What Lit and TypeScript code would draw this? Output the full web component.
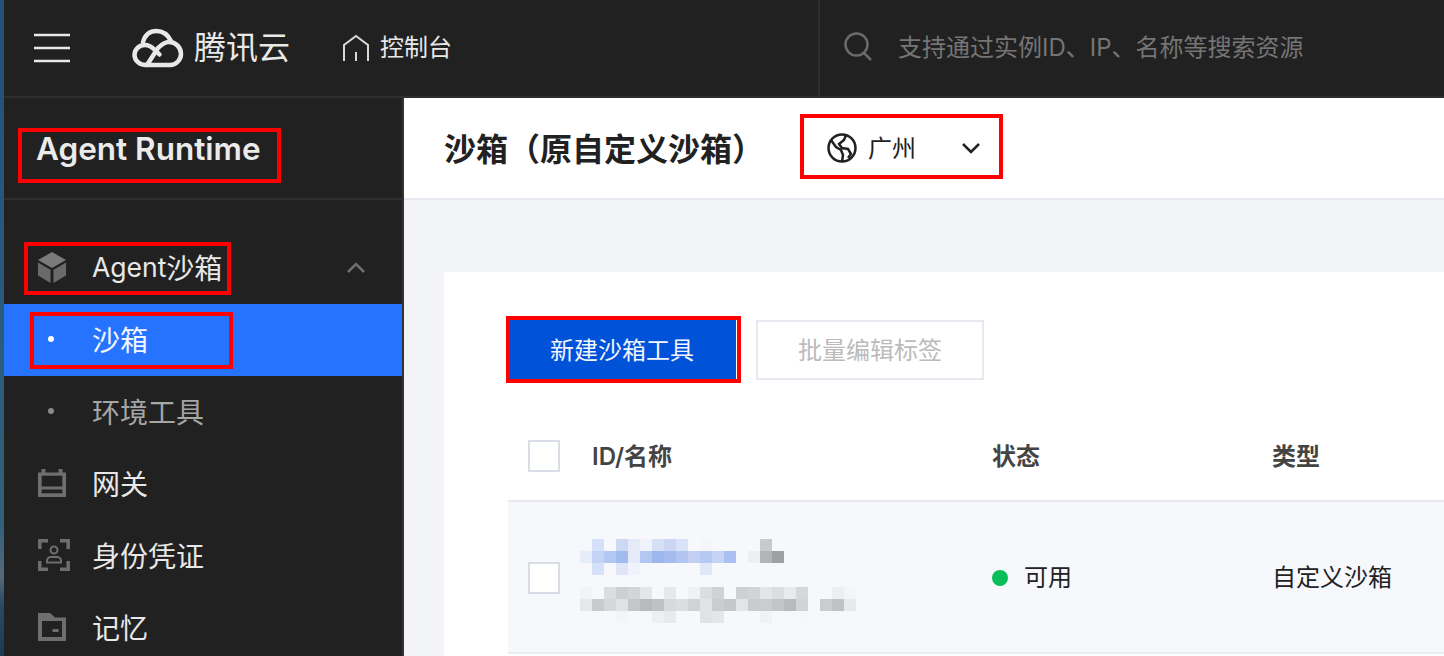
import { LitElement, css, html, svg } from 'lit'
import { customElement } from 'lit/decorators.js'

// red annotation frames drawn on top of the console screenshot
const marks = [
  { x: 18, y: 128, w: 263, h: 55 },
  { x: 24, y: 242, w: 207, h: 53 },
  { x: 30, y: 312, w: 203, h: 57 },
  { x: 800, y: 114, w: 203, h: 65 },
  { x: 506, y: 316, w: 235, h: 67 },
]

// mosaic over the instance id / name, one string of colours per row (12px cells)
const blurId = [
  ',d5e1f8,,cdd8f5,e4eaf8,f0f3fb,d5e0f7,cbd6f4,dae2f7,,f5f6fb,,,,,c9cacc,',
  'e6ecf8,c3d3f4,b2c7f2,a2bbef,e4eaf8,b2c7f2,9db8ee,a5bdee,b2c5f1,c2cff3,b6c9f2,c6d3f5,a9c0f0,,eeeff2,b3b4b6,9fa0a2',
  ',d5e1f8,,e0e6f8,f0f3fb,,,,,,e0e7f9,,,,,,',
]
const blurName = [
  'f2f3f6,,dcdde0,cecfd2,d3d5d8,e5e6e9,,e7e8eb,,f0f1f4,dcdde0,d0d2d5,,cfd0d3,d2d3d5,e4e5e8,dcdde0,e9eaed,d5d7da,,,edeef1,f4f5f8',
  'e6e7ea,c9cacd,d6d7d9,e1e2e4,c5c6c8,b9babc,c0c1c3,d8d9db,dcdde0,d1d2d5,e2e3e5,cbccd0,c6c7ca,e3e4e6,cacbcd,cbcccf,c4c5c8,b9babc,d2d3d6,,cbccd0,c1c2c5,e8e9ec',
  ',,,f3f4f7,,,eeeff2,e9eaed,,,e1e2e4,e5e6e9,,,,f1f2f5,,,f6f7f9,,,,',
]

const icons = {
  cube: svg`<svg width="28" height="31" viewBox="0 0 28 31"><path fill="#7a7a7a" d="M14 0l14 8-14 8L0 8z"/><path fill="#6a6a6a" d="M0 10.500l12.500 7.300V31L0 23.500zM28 10.500l-12.500 7.300V31L28 23.500z"/></svg>`,
  gateway: svg`<svg width="28" height="28" viewBox="0 0 28 28"><path fill="#6e6e6e" fill-rule="evenodd" d="M3.500 0h4v3.500h13V0h4v3.500H28V28H0V3.500h3.500zM3.700 6.800v10.700h20.600V6.800zM3.700 20.500v3.700h20.600v-3.700z"/></svg>`,
  identity: svg`<svg width="32" height="32" viewBox="0 0 32 32"><g fill="none" stroke="#6e6e6e"><path stroke-width="3.500" d="M10 1.800H1.800V10M22 1.800h8.200V10M10 30.200H1.800V22M22 30.200h8.200V22"/><circle stroke-width="2" cx="16" cy="11" r="3.500"/><path stroke-width="2" d="M9 23.500v-2c0-2 2-3.500 4-3.500h6c2 0 4 1.500 4 3.500v2z"/></g></svg>`,
  folder: svg`<svg width="28" height="28" viewBox="0 0 28 28"><path fill="#6e6e6e" fill-rule="evenodd" d="M0 0h12l5 4.500h11V28H0zM4 8v16h20V8z"/><path fill="#6e6e6e" d="M14.500 16h6v3h-6z"/></svg>`,
}

@customElement('app-root')
export class AppRoot extends LitElement {
  static styles = css`
    :host {
      display: block;
      position: relative;
      width: 1444px;
      height: 656px;
      overflow: hidden;
      font-family: Inter, 'Noto Sans CJK SC', sans-serif;
      /* bit of desktop wallpaper showing left of the browser window */
      background: linear-gradient(180deg, #24507a 0%, #2c5a7c 50%, #33607a 80%, #56687a 88%, #2a4a66 92%, #1c3a55 100%);
    }
    .window {
      margin-left: 4px;
      height: 656px;
      display: flex;
      flex-direction: column;
    }
    .topbar {
      flex: none;
      height: 96px;
      background: #212121;
      border-bottom: 2px solid #2e2e2e;
      display: flex;
      align-items: center;
    }
    .menu {
      margin-left: 30px;
      display: block;
    }
    .logo {
      margin-left: 62px;
      display: block;
    }
    .brand {
      margin-left: 10px;
      width: 96px;
      font-size: 32px;
      line-height: 40px;
      color: #e8e8e8;
      white-space: nowrap;
    }
    .home {
      margin-left: 51px;
      display: block;
    }
    .console {
      margin-left: 9px;
      width: 438px;
      padding-bottom: 5px;
      font-size: 24px;
      color: #e8e8e8;
    }
    .search {
      align-self: stretch;
      flex: 1;
      border-left: 2px solid #2e2e2e;
      display: flex;
      align-items: center;
      padding-left: 24px;
      padding-bottom: 4px;
      gap: 26px;
      font-size: 24px;
      color: #757575;
    }
    .search span {
      padding-bottom: 2px;
    }
    .body {
      flex: 1;
      display: flex;
      min-height: 0;
    }
    .sidebar {
      flex: none;
      width: 398px;
      background: #212121;
      border-right: 2px solid #333;
    }
    .product {
      height: 102px;
      box-sizing: border-box;
      padding: 30px 0 0 32px;
      font-size: 31.500px;
      line-height: 42px;
      font-weight: 600;
      color: #ebebeb;
      border-bottom: 2px solid #2e2e2e;
    }
    .nav {
      padding-top: 32px;
    }
    .item {
      height: 72px;
      box-sizing: border-box;
      padding-bottom: 2px;
      display: flex;
      align-items: center;
      color: #e8e8e8;
      font-size: 28px;
      padding-left: 34px;
    }
    .item .ico {
      width: 54px;
      flex: none;
      display: flex;
      align-items: center;
    }
    .latin {
      font-size: 26.500px;
    }
    .item .up {
      margin-left: auto;
      margin-right: 36px;
      display: block;
    }
    .item.sub {
      color: #a6a6a6;
    }
    .item.active {
      background: #2673ff;
      color: #f2f6ff;
    }
    .dot {
      width: 6px;
      height: 6px;
      margin-left: 10px;
      border-radius: 50%;
      background: #8a8a8a;
    }
    .active .dot {
      background: #fff;
    }
    .main {
      flex: 1;
      min-width: 0;
      display: flex;
      flex-direction: column;
      background: #f2f4f8;
    }
    .head {
      flex: none;
      height: 102px;
      box-sizing: border-box;
      background: #fff;
      border-bottom: 2px solid #e6eaf0;
      display: flex;
      align-items: center;
      padding-left: 40px;
    }
    .head h1 {
      margin: 0;
      width: 383px;
      padding-bottom: 2px;
      font-size: 32px;
      font-weight: 600;
      color: #212121;
      white-space: nowrap;
    }
    .region {
      display: flex;
      align-items: center;
      font-size: 24px;
      color: #212121;
    }
    .region span {
      margin-left: 11px;
      width: 93px;
      padding-bottom: 4px;
    }
    .card {
      flex: 1;
      margin: 72px 0 0 40px;
      padding: 48px 0 0 64px;
      background: #fff;
    }
    .actions {
      display: flex;
      gap: 18px;
    }
    .btn {
      box-sizing: border-box;
      height: 60px;
      width: 228px;
      padding-bottom: 4px;
      display: flex;
      align-items: center;
      justify-content: center;
      font-size: 24px;
      border: 2px solid #e6e9f1;
      color: #bbb;
    }
    .btn.primary {
      width: 230px;
      background: #0052d9;
      color: #f2f6ff;
      border: 0;
      border-right: 2px solid #fff;
    }
    .row {
      display: grid;
      grid-template-columns: 64px 400px 280px 1fr;
      align-items: center;
      padding-left: 20px;
      font-size: 24px;
      color: #333;
    }
    .row.th {
      height: 122px;
      box-sizing: border-box;
      padding-top: 32px;
      border-bottom: 2px solid #e6e9f1;
      font-weight: 600;
      color: #444;
    }
    .row.th span:not(.check) {
      padding-bottom: 4px;
    }
    .row.tr {
      height: 152px;
      box-sizing: border-box;
      padding-top: 2px;
      background: #f6f8fc;
      border-bottom: 2px solid #e9ecf2;
      color: #212121;
    }
    .row.tr > span:not(.check),
    .status span {
      padding-bottom: 5px;
    }
    .check {
      box-sizing: border-box;
      width: 32px;
      height: 32px;
      background: #fff;
      border: 2px solid #d8dde8;
    }
    .blur {
      display: flex;
      flex-direction: column;
      gap: 12px;
      margin-left: -12px;
      padding-top: 6px;
    }
    .mosaic {
      display: flex;
      flex-direction: column;
    }
    .mosaic div {
      display: flex;
      height: 12px;
    }
    .mosaic i {
      width: 12px;
      height: 12px;
      flex: none;
    }
    .status {
      display: flex;
      align-items: center;
      gap: 16px;
    }
    .status b {
      width: 16px;
      height: 16px;
      border-radius: 50%;
      background: #0abf5b;
    }
    .mark {
      position: absolute;
      box-sizing: border-box;
      border: 4px solid #ff0000;
    }
  `

  mosaic(rows: string[]) {
    return html`<div class="mosaic">
      ${rows.map(
        (r) => html`<div>
          ${r.split(',').map((c) => html`<i style=${c ? `background:#${c}` : ''}></i>`)}
        </div>`
      )}
    </div>`
  }

  render() {
    return html`
      <div class="window">
        <div class="topbar">
          <svg class="menu" width="36" height="30" viewBox="0 0 36 30">
            <path fill="none" stroke="#e8e8e8" stroke-width="2.500" d="M0 2h36M0 15h36M0 28h36" />
          </svg>
          <svg class="logo" width="52" height="40" viewBox="0 0 52 40">
            <g fill="none" stroke="#e8e8e8" stroke-width="4.500" stroke-linecap="round">
              <path d="M14 37C7 37 2.500 32 2.500 27c0-6 5-10 10.500-10 4 0 7 2 10 5l4.500 4.500" />
              <path d="M11 14C13 7 18 3 24.500 3 31 3 36 7 39 13" />
              <path d="M14 37h24c6 0 11-5 11-11 0-6.500-5-12-12-12-5 0-8 3-11 6L15 37" />
            </g>
          </svg>
          <div class="brand">腾讯云</div>
          <svg class="home" width="30" height="28" viewBox="0 0 30 28">
            <path fill="none" stroke="#d8d8d8" stroke-width="2" d="M3 27V11L15 2l12 9v16M15 18v9" />
          </svg>
          <div class="console">控制台</div>
          <div class="search">
            <svg width="28" height="30" viewBox="0 0 28 30">
              <circle cx="12.500" cy="13.500" r="11" fill="none" stroke="#6a6a6a" stroke-width="2.500" />
              <path stroke="#6a6a6a" stroke-width="2.500" d="M20 22l7 7" />
            </svg>
            <span>支持通过实例ID、IP、名称等搜索资源</span>
          </div>
        </div>
        <div class="body">
          <div class="sidebar">
            <div class="product">Agent Runtime</div>
            <div class="nav">
              <div class="item">
                <span class="ico">${icons.cube}</span><span class="latin">Agent</span>沙箱
                <svg class="up" width="20" height="12" viewBox="0 0 20 12">
                  <path fill="none" stroke="#6e6e6e" stroke-width="2.500" d="M2 11l8-8 8 8" />
                </svg>
              </div>
              <div class="item sub active"><span class="ico"><i class="dot"></i></span>沙箱</div>
              <div class="item sub"><span class="ico"><i class="dot"></i></span>环境工具</div>
              <div class="item"><span class="ico">${icons.gateway}</span>网关</div>
              <div class="item"><span class="ico">${icons.identity}</span>身份凭证</div>
              <div class="item"><span class="ico">${icons.folder}</span>记忆</div>
            </div>
          </div>
          <div class="main">
            <div class="head">
              <h1>沙箱（原自定义沙箱）</h1>
              <div class="region">
                <svg width="30" height="30" viewBox="0 0 30 30">
                  <g fill="none" stroke="#212121" stroke-width="2.500">
                    <circle cx="15" cy="15" r="13.500" />
                    <path d="M4 7l5 7 5 3 2 5-1 7M19 2l-2 5-5 4 3 4 6 1 3 5-3 4" />
                  </g>
                </svg>
                <span>广州</span>
                <svg width="20" height="12" viewBox="0 0 20 12">
                  <path fill="none" stroke="#212121" stroke-width="2.500" d="M2 2l8 8 8-8" />
                </svg>
              </div>
            </div>
            <div class="card">
              <div class="actions">
                <div class="btn primary">新建沙箱工具</div>
                <div class="btn">批量编辑标签</div>
              </div>
              <div class="row th">
                <span class="check"></span>
                <span>ID/名称</span>
                <span>状态</span>
                <span>类型</span>
              </div>
              <div class="row tr">
                <span class="check"></span>
                <div class="blur">${this.mosaic(blurId)}${this.mosaic(blurName)}</div>
                <div class="status"><b></b><span>可用</span></div>
                <span>自定义沙箱</span>
              </div>
            </div>
          </div>
        </div>
      </div>
      ${marks.map(
        (m) =>
          html`<div
            class="mark"
            style="left:${m.x}px;top:${m.y}px;width:${m.w}px;height:${m.h}px"
          ></div>`
      )}
    `
  }
}
